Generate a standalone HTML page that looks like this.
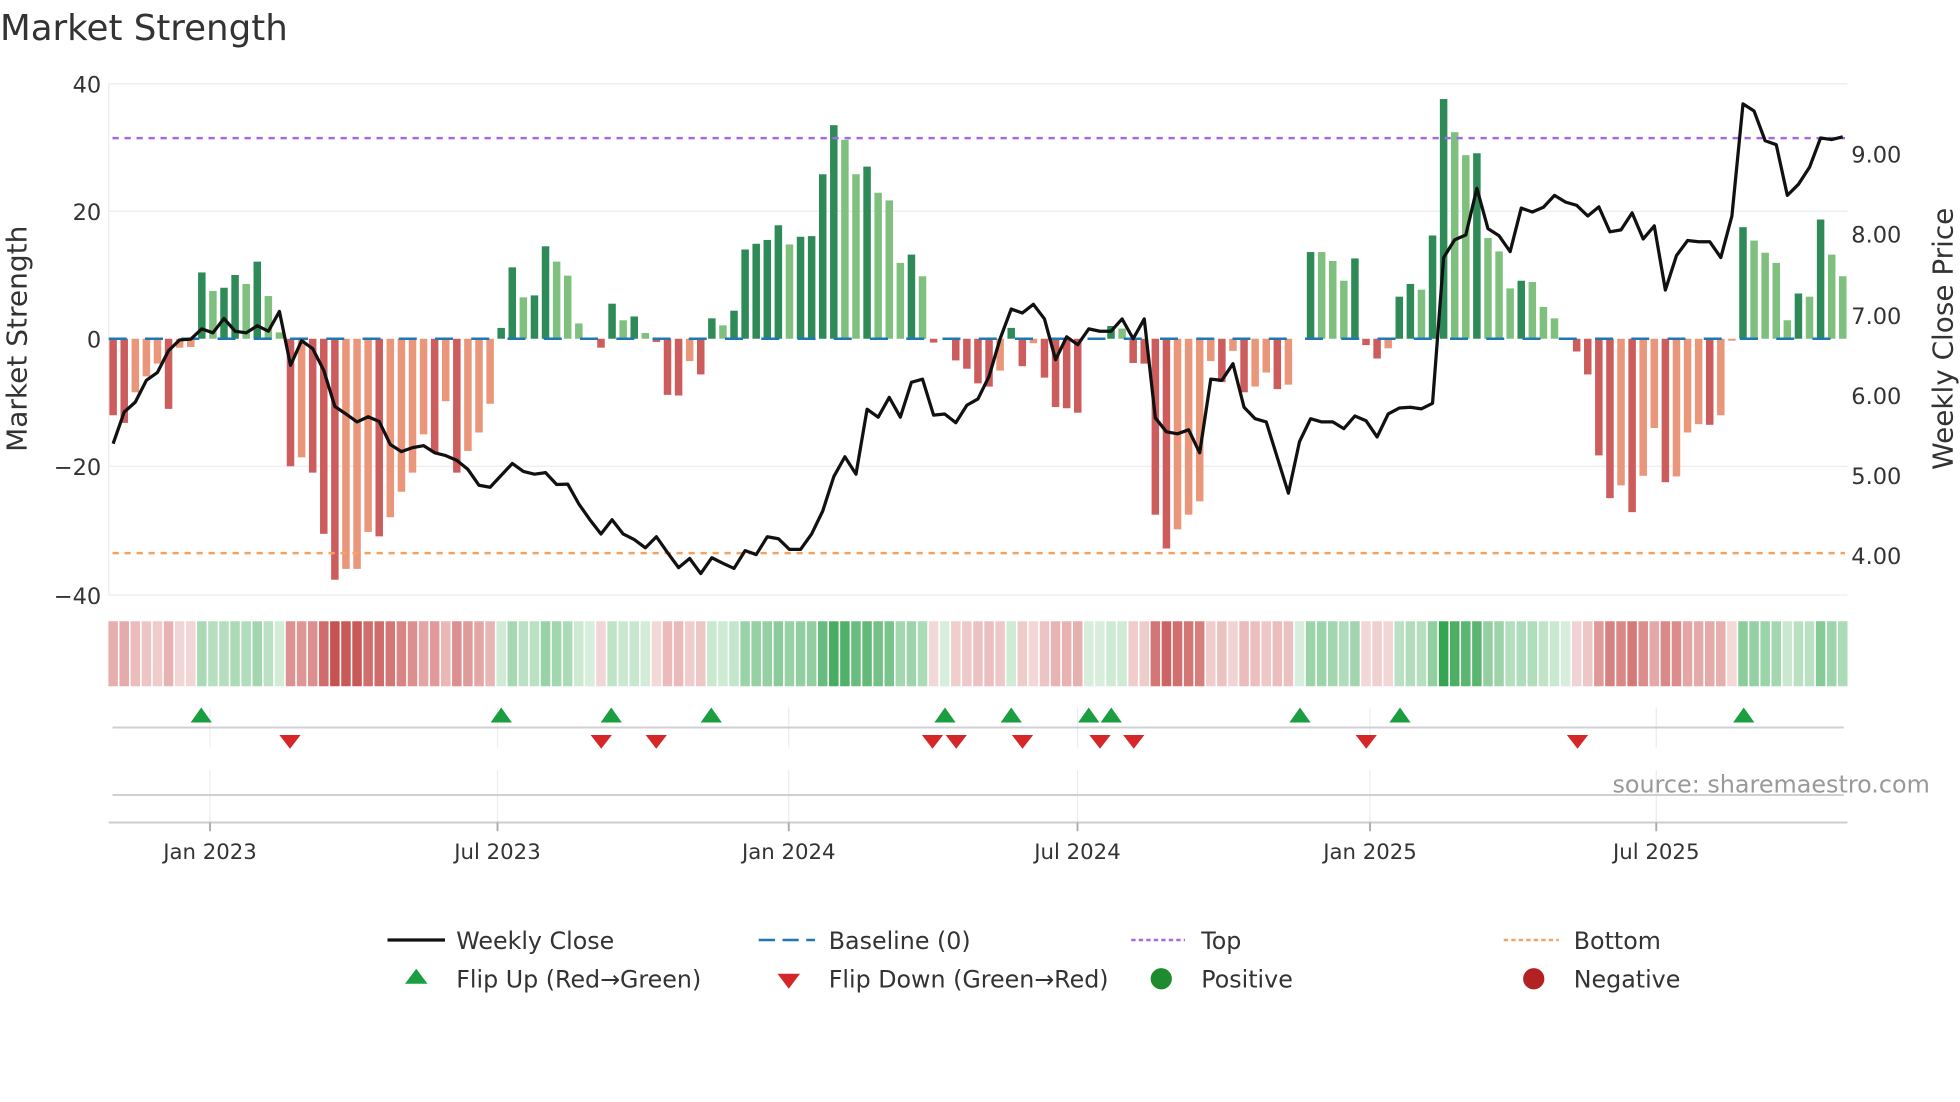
<!DOCTYPE html>
<html><head><meta charset="utf-8"><style>
html,body{margin:0;padding:0;background:#fff;}
svg{display:block;}
text{font-family:"DejaVu Sans","Liberation Sans",sans-serif;fill:#333;}
</style></head><body>
<svg id="c" width="1960" height="1102" viewBox="0 0 1568 881.6" xmlns="http://www.w3.org/2000/svg">
<rect width="1568" height="882" fill="#fff"/>
<text x="0" y="32" font-size="28.5" fill="#333">Market Strength</text>
<g stroke="#ececec" stroke-width="1">
<line x1="87" y1="67" x2="1478" y2="67"/><line x1="87" y1="169" x2="1478" y2="169"/>
<line x1="87" y1="373" x2="1478" y2="373"/><line x1="87" y1="476" x2="1478" y2="476"/>
<line x1="87" y1="67" x2="87" y2="476"/>
</g>
<g font-size="18" text-anchor="end">
<text x="81" y="74">40</text><text x="81" y="176">20</text><text x="81" y="278">0</text>
<text x="81" y="380">−20</text><text x="81" y="483">−40</text>
</g>
<g font-size="18">
<text x="1481" y="130">9.00</text><text x="1481" y="194">8.00</text><text x="1481" y="259">7.00</text>
<text x="1481" y="323">6.00</text><text x="1481" y="387">5.00</text><text x="1481" y="451">4.00</text>
</g>
<text transform="translate(21,271) rotate(-90)" font-size="22.4" text-anchor="middle">Market Strength</text>
<text transform="translate(1562,271) rotate(-90)" font-size="22.3" text-anchor="middle">Weekly Close Price</text>
<g id="bars"></g>
<line x1="87" y1="271" x2="1478" y2="271" stroke="#1f77b4" stroke-width="2" stroke-dasharray="14.4 14.6"/>
<line x1="90" y1="110.5" x2="1476" y2="110.5" stroke="#a66be0" stroke-width="2" stroke-dasharray="5 4.6"/>
<line x1="90" y1="442.5" x2="1476" y2="442.5" stroke="#f4a261" stroke-width="2" stroke-dasharray="5 4.6"/>
<polyline id="price" fill="none" stroke="#111" stroke-width="2.6" stroke-linejoin="round"/>
<g id="strip"></g>
<g stroke="#ececec" stroke-width="1">
<line x1="168" y1="566" x2="168" y2="598"/><line x1="398" y1="566" x2="398" y2="598"/><line x1="631" y1="566" x2="631" y2="598"/><line x1="862" y1="566" x2="862" y2="598"/><line x1="1096" y1="566" x2="1096" y2="598"/><line x1="1325" y1="566" x2="1325" y2="598"/>
<line x1="168" y1="616" x2="168" y2="658"/><line x1="398" y1="616" x2="398" y2="658"/><line x1="631" y1="616" x2="631" y2="658"/><line x1="862" y1="616" x2="862" y2="658"/><line x1="1096" y1="616" x2="1096" y2="658"/><line x1="1325" y1="616" x2="1325" y2="658"/>
</g>
<line x1="90" y1="582" x2="1475" y2="582" stroke="#d0d0d4" stroke-width="1.6"/>
<line x1="90" y1="636" x2="1475" y2="636" stroke="#d0d0d4" stroke-width="1.6"/>
<line x1="87" y1="658" x2="1478" y2="658" stroke="#ccc" stroke-width="1.6"/>
<g stroke="#aaa" stroke-width="1.5">
<line x1="168" y1="658" x2="168" y2="665"/><line x1="398" y1="658" x2="398" y2="665"/><line x1="631" y1="658" x2="631" y2="665"/><line x1="862" y1="658" x2="862" y2="665"/><line x1="1096" y1="658" x2="1096" y2="665"/><line x1="1325" y1="658" x2="1325" y2="665"/>
</g>
<g id="flips"></g>
<text x="1290" y="634" font-size="19.1" style="fill:#999">source: sharemaestro.com</text>
<g font-size="17" text-anchor="middle">
<text x="168" y="687">Jan 2023</text><text x="398" y="687">Jul 2023</text><text x="631" y="687">Jan 2024</text>
<text x="862" y="687">Jul 2024</text><text x="1096" y="687">Jan 2025</text><text x="1325" y="687">Jul 2025</text>
</g>
<g font-size="19">
<line x1="310" y1="752" x2="356" y2="752" stroke="#111" stroke-width="2.6"/>
<text x="365" y="759">Weekly Close</text>
<line x1="607" y1="752" x2="652" y2="752" stroke="#1f77b4" stroke-width="2" stroke-dasharray="13 6"/>
<text x="663" y="759">Baseline (0)</text>
<line x1="905" y1="752" x2="948" y2="752" stroke="#a66be0" stroke-width="2" stroke-dasharray="3.5 2.5"/>
<text x="961" y="759">Top</text>
<line x1="1203" y1="752" x2="1247" y2="752" stroke="#f4a261" stroke-width="2" stroke-dasharray="3.5 2.5"/>
<text x="1259" y="759">Bottom</text>
<polygon points="324,787 342,787 333,775" fill="#1a9e3f"/>
<text x="365" y="790">Flip Up (Red→Green)</text>
<polygon points="622,779 640,779 631,791" fill="#d62728"/>
<text x="663" y="790">Flip Down (Green→Red)</text>
<circle cx="929" cy="783" r="8.5" fill="#1e8c2e"/>
<text x="961" y="790">Positive</text>
<circle cx="1227" cy="783" r="8.5" fill="#b22222"/>
<text x="1259" y="790">Negative</text>
</g>
</svg>
<script>
(function(){
var NS="http://www.w3.org/2000/svg";
var B=[[-12,1],[-13.2,1],[-8.4,0],[-5.9,0],[-3.9,0],[-11,1],[-1.4,0],[-1.3,0],[10.4,1],[7.5,0],[8,1],[10,1],[8.6,0],[12.1,1],[6.7,0],[1,0],
[-20,1],[-18.6,0],[-21,1],[-30.6,1],[-37.8,1],[-36.1,0],[-36.1,0],[-30.3,0],[-31,1],[-28,0],[-24,0],[-21,0],[-15,0],[-17.8,1],[-9.8,0],[-21,1],[-17.6,0],[-14.7,0],[-10.2,0],
[1.7,1],[11.2,1],[6.5,0],[6.8,1],[14.5,1],[12.1,0],[9.9,0],[2.4,0],[0,0],[-1.4,1],[5.5,1],[2.9,0],[3.5,1],[0.9,0],[-0.5,1],[-8.8,1],[-8.9,1],[-3.5,0],[-5.6,1],
[3.2,1],[2.1,0],[4.4,1],[14,1],[14.9,1],[15.5,1],[17.8,1],[14.8,0],[16,1],[16.1,1],[25.8,1],[33.5,1],[31.2,0],[25.8,0],[27,1],[22.9,0],[21.7,0],[11.9,0],[13.2,1],[9.8,0],
[-0.6,1],[0,0],[-3.4,1],[-4.7,1],[-7,1],[-7.5,1],[-5,0],[1.7,1],[-4.3,1],[-0.7,0],[-6.1,1],[-10.7,1],[-10.9,1],[-11.6,1],[0,0],[0,0],[2,1],[1.6,0],[-3.8,1],[-3.9,1],
[-27.6,1],[-32.9,1],[-29.9,0],[-27.6,0],[-25.5,0],[-3.5,0],[-6.8,1],[-1.9,0],[-8.4,1],[-7.5,0],[-5.3,0],[-7.9,1],[-7.2,0],[0,0],
[13.6,1],[13.6,0],[12.2,0],[9.1,0],[12.6,1],[-1,1],[-3.1,1],[-1.5,0],[6.6,1],[8.6,1],[7.7,0],[16.2,1],[37.6,1],[32.4,0],[28.8,0],[29.1,1],[15.8,0],[13.7,0],[7.9,0],[9.1,1],[8.9,0],[5,0],[3.2,0],[0,0],
[-2,1],[-5.6,1],[-18.3,1],[-25,1],[-23,0],[-27.2,1],[-21.5,0],[-14,0],[-22.5,1],[-21.6,0],[-14.7,0],[-13.4,0],[-13.5,1],[-12,0],[-0.3,0],
[17.5,1],[15.4,0],[13.5,0],[11.9,0],[2.9,0],[7.1,1],[6.6,0],[18.7,1],[13.2,0],[9.8,0]];
var L=[920,840,815,760,740,685,658,656,630,640,604,636,640,622,636,586,722,660,680,735,826,845,865,852,864,922,940,930,925,943,950,962,985,1025,1030,1000,970,990,997,993,1023,
1022,1072,1112,1148,1112,1148,1162,1183,1155,1195,1233,1210,1248,1208,1222,1235,1190,1200,1155,1160,1187,1187,1148,1090,1003,953,997,833,853,803,853,765,757,848,845,867,823,807,750,655,
580,590,568,605,708,650,670,630,636,636,605,655,605,855,890,895,885,943,757,760,718,828,857,865,955,1045,915,857,865,865,882,850,862,903,845,830,828,832,818,
450,405,393,275,377,395,435,325,335,323,293,310,318,345,322,385,380,337,403,370,532,445,407,410,410,450,345,62,80,155,165,293,265,222,148,152,145];
var step=8.87,x0=90.5,bw=6,gb=document.getElementById("bars"),gs=document.getElementById("strip");
function mix(a,b,t){return "rgb("+[0,1,2].map(function(k){return Math.round(a[k]+(b[k]-a[k])*t)}).join(",")+")";}
for(var i=0;i<B.length;i++){
 var v=B[i][0],d=B[i][1],x=x0+step*i;
 if(v!==0){
  var h=Math.abs(v)*5.1,y=v>0?271-h:271;
  var col=v>0?(d?"#2e8b57":"#80c07f"):(d?"#cd5c5c":"#e9967a");
  var r=document.createElementNS(NS,"rect");
  r.setAttribute("x",(x-bw/2).toFixed(2));r.setAttribute("y",y.toFixed(2));
  r.setAttribute("width",bw);r.setAttribute("height",Math.max(h,0.8).toFixed(2));r.setAttribute("fill",col);gb.appendChild(r);
 }
 var t=Math.min(Math.abs(v)/38,1);
 var c=v>=0?mix([214,238,219],[52,164,80],t):mix([244,218,218],[199,82,80],t);
 var s=document.createElementNS(NS,"rect");
 s.setAttribute("x",(x-3.8).toFixed(2));s.setAttribute("y",497);s.setAttribute("width",7.6);s.setAttribute("height",52);s.setAttribute("fill",c);gs.appendChild(s);
}
var pts=[];
for(var j=0;j<L.length;j++){pts.push((x0+step*j).toFixed(2)+","+(271+(L[j]-655)*0.3168).toFixed(2));}
document.getElementById("price").setAttribute("points",pts.join(" "));
var gf=document.getElementById("flips");
[161,401,489,569,756,809,871,889,1040,1120,1395].forEach(function(x){
 var p=document.createElementNS(NS,"polygon");p.setAttribute("points",(x-8.5)+",578 "+(x+8.5)+",578 "+x+",566");p.setAttribute("fill","#1a9e3f");gf.appendChild(p);});
[232,481,525,746,765,818,880,907,1093,1262].forEach(function(x){
 var p=document.createElementNS(NS,"polygon");p.setAttribute("points",(x-8.5)+",588 "+(x+8.5)+",588 "+x+",599");p.setAttribute("fill","#d62728");gf.appendChild(p);});
})();
</script>
</body></html>
